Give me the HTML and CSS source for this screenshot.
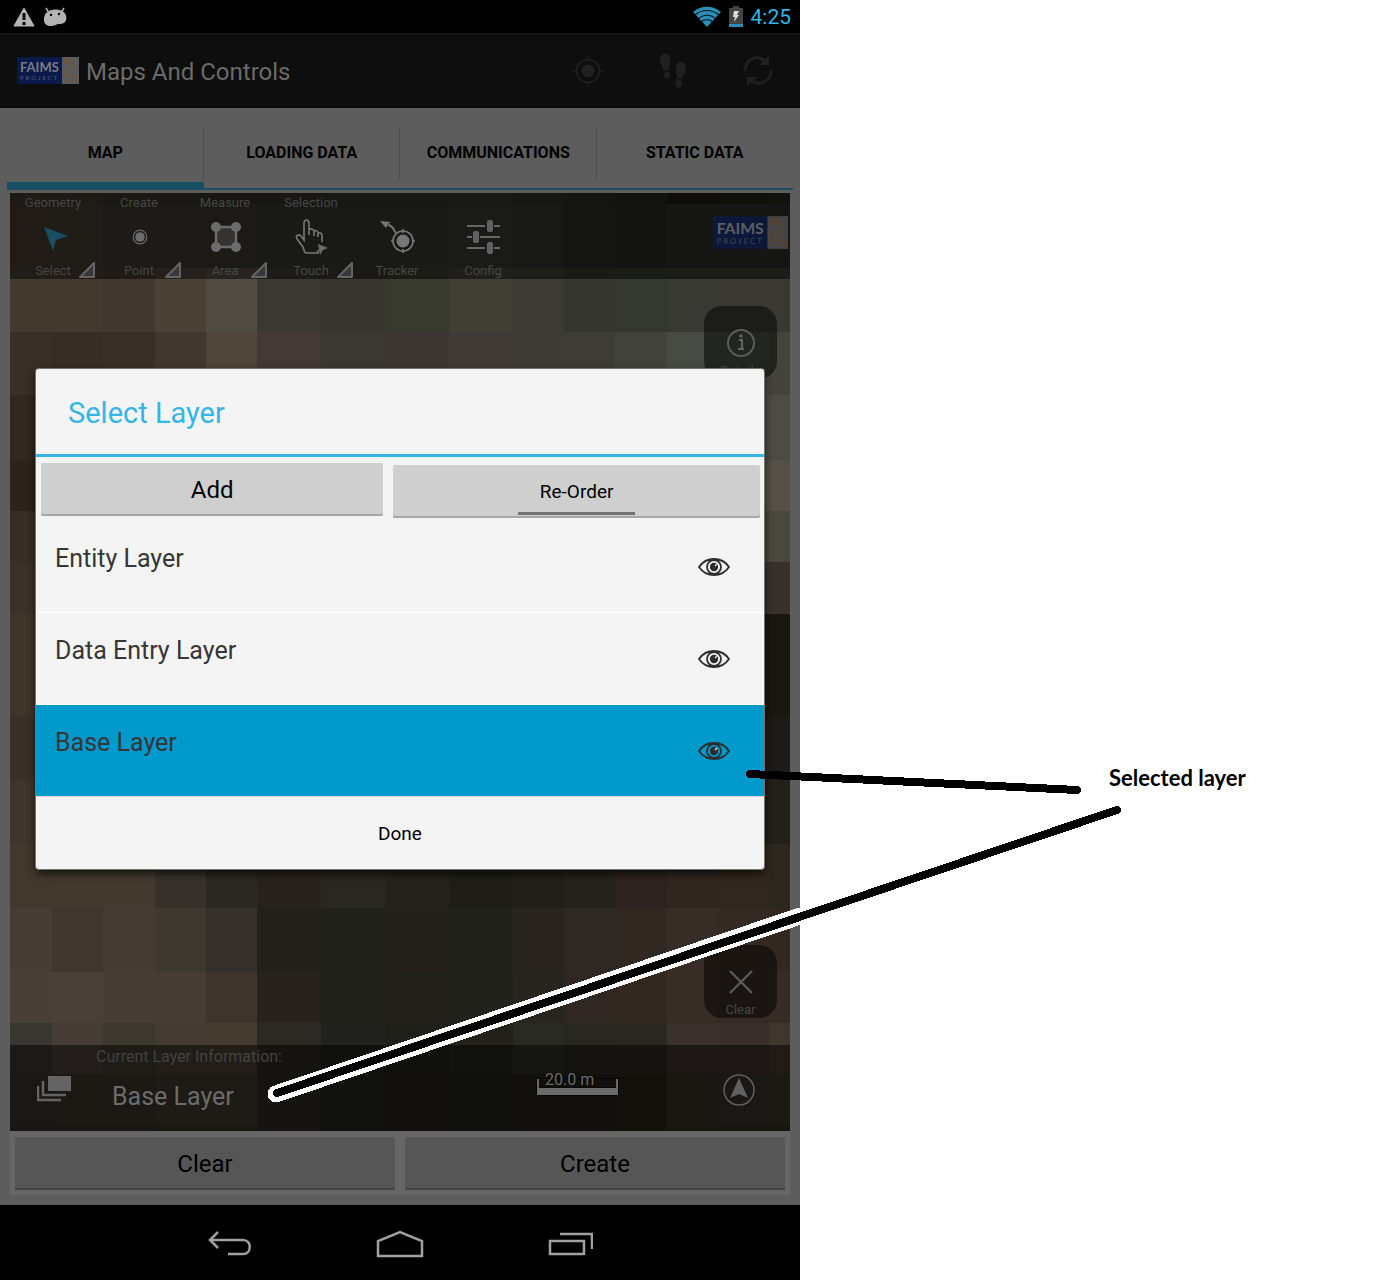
FILE: index.html
```html
<!DOCTYPE html>
<html lang="en">
<head>
<meta charset="utf-8">
<meta name="viewport" content="width=device-width, initial-scale=1">
<title>Maps And Controls</title>
<link rel="stylesheet" href="styles.css">
</head>
<body>
<svg class="defs" width="0" height="0" aria-hidden="true">
  <symbol id="eye" viewBox="0 0 32 18">
    <path d="M1 9C5 3 11 1 16 1s11 2 15 8c-4 6-10 8-15 8S5 15 1 9z" fill="none" stroke="#2d2d2d" stroke-width="1.800"/>
    <circle cx="16" cy="9" r="7" fill="none" stroke="#2d2d2d" stroke-width="1.800"/>
    <path d="M10 1h12v2H10zM10 15h12v2H10z" fill="#2d2d2d"/>
    <circle cx="16" cy="9" r="4.200" fill="#2d2d2d"/>
    <path d="M17 8l2-2" stroke="#ddd" stroke-width="1.500"/>
  </symbol>
  <symbol id="corner" viewBox="0 0 18 18">
    <path d="M16 2v14H2z" fill="#38383a" stroke="#646464" stroke-width="2" stroke-linejoin="round"/>
  </symbol>
</svg>

<div class="page">
  <main class="device">
    <header class="status">
      <svg width="22" height="20" viewBox="0 0 22 20"><path d="M11 1L21 19H1z" fill="#b4b4b4" stroke="#b4b4b4" stroke-linejoin="round"/><path d="M11 6v7M11 15v3" stroke="#000" stroke-width="3"/></svg>
      <svg width="24" height="20" viewBox="0 0 24 20"><path d="M3 1l3 5M21 1l-3 5" stroke="#b4b4b4" stroke-width="1.500"/><path d="M6 4c4-2 9-2 13 0 4 2 5 6 4 9-1 4-5 4-8 4-3 1-4 2-7 2-4 0-7-2-7-6 0-4 1-7 5-9z" fill="#b4b4b4"/><circle cx="8" cy="8" r="1.200"/><circle cx="16" cy="7" r="1.200"/></svg>
      <span class="status-gap"></span>
      <svg width="28" height="22" viewBox="0 0 28 22"><path d="M0 6C8-1 20-1 28 6L14 21z" fill="#2a8fb8"/><path d="M2 9c7-6 17-6 24 0M5 13c5-5 13-5 18 0M8 16c3-3 9-3 12 0" fill="none" stroke="#05141a" stroke-width="1.200"/></svg>
      <svg width="14" height="22" viewBox="0 0 14 22"><path d="M4 0h6v2h4v17H0V2h4z" fill="#444"/><path d="M0 18h14v3H0z" fill="#2a8fb8"/><path d="M5 5h5L8 9h2l-5 7 1-5H4z" fill="#ddd"/></svg>
      <time class="clock">4:25</time>
    </header>

    <div class="app">
      <header class="actionbar">
        <svg width="62" height="27" viewBox="0 0 62 27">
          <rect class="logo-blue" width="45" height="27"/>
          <rect class="logo-panel" x="45" width="17" height="27"/>
          <text class="logo-name" x="3" y="15">FAIMS</text>
          <text class="logo-sub" x="3" y="23">PROJECT</text>
          <path class="logo-art" d="M46 2h8v2h-7M47 6h8v3h3M55 2v7M58 13H47v10M48 17h6v3h-5M55 18h4M55 21h5v3H50"/>
        </svg>
        <h1>Maps And Controls</h1>
        <button type="button" aria-label="Locate"><svg width="32" height="32" viewBox="0 0 32 32" fill="none" stroke="#202020" stroke-width="1.600"><circle cx="16" cy="16" r="11.500"/><circle cx="16" cy="16" r="6.500" fill="#202020" stroke="none"/><path d="M16 0v5M16 27v5M0 16h5M27 16h5"/></svg></button>
        <button type="button" aria-label="Track"><svg width="26" height="36" viewBox="0 0 26 36" fill="#202020"><path d="M4 1c4-2 6 2 6 7 0 4-1 6-1 9l-5 1C3 14 0 11 0 7c0-3 1-5 4-6zM4 20l5-2c2 4 1 8-2 8s-3-3-3-6zM22 9c3 1 4 4 4 7 0 4-3 6-4 10l-5-1c0-3-1-5-1-8 0-5 2-9 6-8zM16 26l6 2c0 4-1 7-4 7-3-1-3-5-2-9z"/></svg></button>
        <button type="button" aria-label="Refresh"><svg width="30" height="32" viewBox="0 0 30 32"><g fill="none" stroke="#202020" stroke-width="3"><path d="M2 16C2 4 14-1 22 6M28 15c0 12-12 17-20 10"/></g><path d="M26 1v9H16zM4 31v-9h10z" fill="#202020"/></svg></button>
      </header>

      <nav class="tabs">
        <a class="tab active" href="#map">MAP</a>
        <a class="tab" href="#loading">LOADING DATA</a>
        <a class="tab" href="#communications">COMMUNICATIONS</a>
        <a class="tab" href="#static">STATIC DATA</a>
      </nav>

      <section class="map" id="map">
        <svg class="tiles" viewBox="10 193 780 938" preserveAspectRatio="none" shape-rendering="crispEdges" aria-hidden="true"></svg>
        <div class="toolbar">
          <button type="button" class="tool"><span>Geometry</span>
            <svg width="36" height="36" viewBox="0 0 36 36"><path d="M9 8l24 9-12 4-3 11z" fill="#194e61"/></svg>
            <span>Select</span><svg class="corner"><use href="#corner"/></svg></button>
          <button type="button" class="tool"><span>Create</span>
            <svg width="36" height="36" viewBox="0 0 36 36"><circle cx="19" cy="18" r="6.800" fill="none" stroke="#6c6c6c" stroke-width="1.200"/><circle cx="19" cy="18" r="4.800" fill="#6c6c6c"/></svg>
            <span>Point</span><svg class="corner"><use href="#corner"/></svg></button>
          <button type="button" class="tool"><span>Measure</span>
            <svg width="36" height="36" viewBox="0 0 36 36"><rect x="9" y="8" width="20" height="20" fill="#343331" stroke="#6c6c6c" stroke-width="2.500"/><g fill="#6c6c6c"><circle cx="9" cy="8" r="5"/><circle cx="29" cy="8" r="5"/><circle cx="9" cy="28" r="5"/><circle cx="29" cy="28" r="5"/></g></svg>
            <span>Area</span><svg class="corner"><use href="#corner"/></svg></button>
          <button type="button" class="tool"><span>Selection</span>
            <svg width="36" height="36" viewBox="0 0 36 36"><path d="M12 34l-2-6-6-8c-2-4 2-5 4-3l3 4V4c0-4 5-4 5 0v7c2-2 4-1 5 1 2-1 4 0 4 2 3-1 4 1 4 3v6M12 34h13v-3M16 11v5M21 12v5M25 14v4" fill="none" stroke="#777" stroke-width="1.600"/><path d="M25 25l10 4-5 2-3 5z" fill="#6c6c6c"/></svg>
            <span>Touch</span><svg class="corner"><use href="#corner"/></svg></button>
          <button type="button" class="tool"><span></span>
            <svg width="36" height="36" viewBox="0 0 36 36" fill="none" stroke="#777" stroke-width="1.600"><path d="M1 2l11 1-3 2-2 4z" fill="#777" stroke="none"/><path d="M9 6c6 1 5 5 8 8" stroke-width="2"/><circle cx="24" cy="22" r="10"/><circle cx="24" cy="22" r="6.500" fill="#777" stroke="none"/><path d="M24 10v4M24 30v4M12 22h3M33 22h3"/></svg>
            <span>Tracker</span></button>
          <button type="button" class="tool"><span></span>
            <svg width="36" height="36" viewBox="0 0 36 36"><path d="M2 7h18M29 7h6M2 18h5M15 18h20M2 29h18M29 29h6" stroke="#666" stroke-width="2"/><g fill="#606060"><rect x="22" y="1" width="6" height="12" rx="2"/><rect x="8" y="12" width="6" height="12" rx="2"/><rect x="22" y="23" width="6" height="12" rx="2"/></g></svg>
            <span>Config</span></button>
          <svg class="map-logo" width="75" height="33" viewBox="0 0 62 27">
            <rect class="logo-blue" width="45" height="27"/>
            <rect class="logo-panel" x="45" width="17" height="27"/>
            <text class="logo-name" x="3" y="15">FAIMS</text>
            <text class="logo-sub" x="3" y="23">PROJECT</text>
            <path class="logo-art" d="M46 2h8v2h-7M47 6h8v3h3M55 2v7M58 13H47v10M48 17h6v3h-5M55 18h4M55 21h5v3H50"/>
          </svg>
        </div>

        <div class="floaters">
          <button type="button" class="floater"><svg width="30" height="30" viewBox="0 0 30 30"><circle cx="15" cy="15" r="13" fill="none" stroke="#5c5c5c" stroke-width="2"/><path d="M13 12h3v9M12 21h6" fill="none" stroke="#646464" stroke-width="2.200"/><circle cx="15" cy="8" r="1.800" fill="#646464"/></svg><span>Details</span></button>
          <button type="button" class="floater"><svg width="30" height="30" viewBox="0 0 30 30"><path d="M4 4l22 22M26 4L4 26" stroke="#5c5c5c" stroke-width="2.200"/></svg><span>Clear</span></button>
        </div>

        <footer class="mapbar">
          <svg class="layers" width="34" height="28" viewBox="0 0 34 28"><path d="M11 1h23v15H11z" fill="#646464"/><path d="M6 6v14h23M1 11v14h23" fill="none" stroke="#646464" stroke-width="2.500"/></svg>
          <div class="layer-info">
            <p class="layer-caption">Current Layer Information:</p>
            <p class="layer-name">Base Layer</p>
          </div>
          <div class="scale"><span>20.0 m</span></div>
          <svg class="compass" width="32" height="32" viewBox="0 0 32 32"><circle cx="16" cy="16" r="15" fill="none" stroke="#606060" stroke-width="1.500"/><path d="M16 4l9 20-9-4-9 4z" fill="#606060"/></svg>
        </footer>
      </section>

      <div class="actions">
        <button type="button">Clear</button>
        <button type="button">Create</button>
      </div>

      <div class="overlay">
        <section class="dialog" role="dialog" aria-labelledby="dialog-title">
          <h2 id="dialog-title">Select Layer</h2>
          <div class="dialog-tools">
            <button type="button" class="add">Add</button>
            <button type="button" class="reorder"><span>Re-Order</span></button>
          </div>
          <ul class="layer-list">
            <li><span>Entity Layer</span><button type="button" aria-label="Show Entity Layer"><svg width="32" height="18"><use href="#eye"/></svg></button></li>
            <li><span>Data Entry Layer</span><button type="button" aria-label="Show Data Entry Layer"><svg width="32" height="18"><use href="#eye"/></svg></button></li>
            <li class="selected"><span>Base Layer</span><button type="button" aria-label="Show Base Layer"><svg width="32" height="18"><use href="#eye"/></svg></button></li>
          </ul>
          <button type="button" class="done">Done</button>
        </section>
      </div>
    </div>

    <nav class="navbar">
      <button type="button" aria-label="Back"><svg width="44" height="26" viewBox="0 0 44 26" fill="none" stroke="#a0a0a0" stroke-width="2.500"><path d="M2 9h33c9 0 9 14 0 14H20M10 1L2 9l8 8"/></svg></button>
      <button type="button" aria-label="Home"><svg width="48" height="28" viewBox="0 0 48 28" fill="none" stroke="#a0a0a0" stroke-width="2.500"><path d="M2 26V11l22-9 22 9v15z"/></svg></button>
      <button type="button" aria-label="Recent apps"><svg width="46" height="26" viewBox="0 0 46 26" fill="none" stroke="#a0a0a0" stroke-width="2.500"><path d="M3 10h34v13H3zM13 3h32v15"/></svg></button>
    </nav>
  </main>

  <aside class="notes"><p>Selected layer</p></aside>

  <svg class="pointers" width="1380" height="1280" viewBox="0 0 1380 1280" shape-rendering="crispEdges" stroke-linecap="round" aria-hidden="true">
    <path d="M276 1094L800 916" stroke="#fff" stroke-width="17"/>
    <path d="M277 1093L1117 810M750 774L1077 790" stroke="#000" stroke-width="8" fill="none"/>
  </svg>
</div>
<script src="script.js"></script>
</body>
</html>
```
FILE: styles.css
```css
* { box-sizing: border-box; }

body {
  margin: 0;
  background: #fff;
  color: #000;
  font-family: Roboto, "Liberation Sans", sans-serif;
}

h1, h2, p, ul { margin: 0; padding: 0; font-weight: 400; }
button { margin: 0; padding: 0; border: 0; background: none; color: inherit; font: inherit; }
svg { display: block; flex: none; }
.defs { position: absolute; }

.page { position: relative; display: flex; min-height: 100vh; overflow: hidden; }
.device { flex: 0 1 800px; display: flex; flex-direction: column; background: #000; }

/* Status bar */
.status { display: flex; align-items: center; gap: 8px; height: 33px; padding: 0 9px 0 13px; }
.status-gap { flex: 1; }
.clock { color: #33b5e5; font-size: 21px; line-height: 33px; padding-top: 2px; }

/* Logo */
.logo-blue { fill: #091a4a; }
.logo-panel { fill: #5c5c60; }
.logo-name { fill: #7c7c84; font-family: Lato, sans-serif; font-size: 13px; font-weight: 700; }
.logo-sub { fill: #565c74; font-family: Lato, sans-serif; font-size: 6px; letter-spacing: 2px; }
.logo-art { fill: none; stroke: #75512f; }

/* Application frame */
.app { position: relative; flex: 1; display: flex; flex-direction: column; background: #5d5d5d; }
.actionbar { display: flex; align-items: center; height: 75px; padding-left: 17px; background: #0e0e0e; box-shadow: inset 0 1px #1a1a1a, inset 0 -2px #090909; }
.actionbar h1 { flex: 1; margin-left: 7px; padding-top: 2px; color: #6b6b6b; font-size: 24px; line-height: 32px; }
.actionbar button { display: grid; place-items: center; width: 85px; height: 75px; }

.tabs { display: flex; height: 82px; margin: 0 7px 3px; padding-top: 8px; }
.tab {
  position: relative;
  flex: 1;
  border-bottom: 2px solid #1b4f61;
  color: #000;
  font-size: 16px;
  font-weight: 700;
  line-height: 73px;
  text-align: center;
  text-decoration: none;
}
.tab.active { border-bottom: 8px solid #184e61; }
.tab + .tab::before { content: ""; position: absolute; top: 10px; left: -1px; width: 1px; height: 53px; background: #4f4f4f; }

/* Map */
.map { position: relative; flex: 1; display: flex; flex-direction: column; margin: 0 10px; overflow: hidden; }
.tiles { position: absolute; inset: 0; width: 100%; height: 100%; }
.toolbar { position: relative; display: flex; height: 86px; background: rgba(0, 0, 0, .5); }
.tool { position: relative; display: grid; grid-template-rows: 20px 48px 20px; place-items: center; align-content: start; width: 86px; color: #464644; font-size: 13px; line-height: 20px; }
.tool .corner { position: absolute; right: 0; bottom: 0; width: 18px; height: 18px; }
.map-logo { margin: 23px 2px 0 auto; opacity: .7; }

.floaters { position: relative; flex: 1; display: flex; flex-direction: column; align-items: flex-end; justify-content: space-between; padding: 27px 13px; }
.floater { display: flex; flex-direction: column; align-items: center; gap: 3px; width: 73px; height: 73px; padding-top: 22px; border-radius: 18px; background: rgba(0, 0, 0, .5); color: #464644; font-size: 13px; line-height: 20px; }

.mapbar { position: relative; display: flex; height: 86px; padding: 0 35px 0 27px; background: rgba(0, 0, 0, .5); }
.layers { margin-top: 30px; }
.layer-info { flex: 1; margin-left: 25px; }
.layer-caption { color: #424240; font-size: 16px; line-height: 24px; }
.layer-name { padding-left: 16px; color: #6c6c6c; font-size: 25px; line-height: 56px; }
.scale {
  width: 81px;
  height: 16px;
  margin: 34px 105px 0 0;
  padding-left: 6px;
  border: solid #6a6a6a;
  border-width: 0 2px 7px;
  box-shadow: 0 0 0 1px #060606, inset 0 -1px #060606;
  color: #6c6c6c;
  font-size: 16px;
  line-height: 2px;
}
.scale span { white-space: nowrap; text-shadow: 0 0 2px #000; }
.compass { margin-top: 29px; }

/* Buttons */
.actions { display: flex; gap: 10px; margin: 0 10px 10px; padding: 6px 5px 5px; background: #666; }
.actions button { flex: 1; height: 53px; border-radius: 2px; background: #565656; box-shadow: inset 0 -2px 0 #444; font-size: 24px; line-height: 54px; }

/* Layer dialog */
.overlay { position: absolute; inset: 0; display: flex; align-items: center; padding: 0 36px; }
.dialog { flex: 1; overflow: hidden; border-radius: 3px; background: #f4f4f4; box-shadow: 0 0 0 1px #77736e, 0 4px 10px rgba(0, 0, 0, .8); }
.dialog h2 { height: 88px; padding-left: 32px; border-bottom: 3px solid #33b5e5; color: #33b5e5; font-size: 29px; line-height: 88px; }
.dialog-tools { display: flex; align-items: flex-start; gap: 10px; padding: 6px 4px 3px 5px; }
.dialog-tools button { height: 53px; border-radius: 2px; background: #cfcfcf; box-shadow: inset 0 -2px 0 #a6a6a6; line-height: 54px; }
.add { flex: 14; font-size: 24px; }
.reorder { flex: 15; display: flex; justify-content: center; margin-top: 2px; font-size: 19px; }
.reorder span { width: 117px; height: 50px; border-bottom: 3px solid #737373; }
.layer-list { list-style: none; }
.layer-list li { display: flex; align-items: center; justify-content: space-between; height: 92px; padding: 0 34px 0 19px; border-bottom: 1px solid #fff; color: #363636; font-size: 25px; }
.layer-list span { align-self: flex-start; line-height: 76px; }
.layer-list .selected { background: #0099cc; border-bottom-color: #d4d4d4; }
.done { display: block; width: 100%; height: 72px; font-size: 19px; line-height: 74px; }

/* System navigation */
.navbar { display: flex; justify-content: center; height: 75px; padding-top: 3px; }
.navbar button { display: grid; place-items: center; width: 170px; }

/* Annotation */
.notes { flex: 1; padding: 763px 0 0 309px; }
.notes p { font-family: Lato, "Open Sans", sans-serif; font-size: 22px; font-weight: 700; line-height: 30px; white-space: nowrap; }
.pointers { position: absolute; top: 0; left: 0; pointer-events: none; }
```
FILE: script.js
```js
// Pixelated raster layer: column and row edges, then one colour per cell.
const cols = [10, 52, 103, 155, 206, 257, 321, 385, 449, 513, 564, 615, 667, 718, 769, 790];
const rows = [193, 204, 268, 332, 395, 460, 511, 562, 614, 716, 780, 844, 908, 972, 1023, 1074, 1126, 1131];
const cells = [
  "3c352d 3c352d 363029 302e28 2e2c25 2e2c25 2f2e27 2f3028 30312a 2b2b28 282825 252522 1c1b18 1f1e19 25241e",
  "40362e 40382f 3a362f 3a362f 37342d 33332c 32342c 32342b 34342f 31312f 2a2a27 292926 2c2c2b 2c2c2a 2b2b27",
  "423a2f 43392f 41372f 4a4137 504a43 3b3831 38352e 38392f 403f36 3b3b34 34362f 343830 383932 393832 393832",
  "3a2f26 382d24 3a2f27 40372e 4e453b 443a35 3b3731 3b3630 3f3a33 3d3c34 3e3c37 42433c 474b43 474b43 44443a",
  "31281f 31281f 31281f 31281f 31281f 31281f 31281f 31281f 4c4b45 4c4b45 4c4b45 4c4b45 4c4b45 4c4b45 4c4b45",
  "2c241b 2c241b 2c241b 2c241b 2c241b 2c241b 2c241b 2c241b 555148 555148 555148 555148 555148 555148 555148",
  "372e25 372e25 372e25 372e25 372e25 372e25 372e25 372e25 4a483e 4a483e 4a483e 4a483e 4a483e 4a483e 4a483e",
  "3c3129 3c3129 3c3129 3c3129 3c3129 3c3129 3c3129 3c3129 38312b 38312b 38312b 38312b 38312b 38312b 38312b",
  "40352b 40352b 40352b 40352b 40352b 40352b 40352b 40352b 1a1711 1a1711 1a1711 1a1711 1a1711 1a1711 1a1711",
  "3b3028 3b3028 3b3028 3b3028 3b3028 3b3028 3b3028 3b3028 1c1b17 1c1b17 1c1b17 1c1b17 1c1b17 1c1b17 1c1b17",
  "40352c 40352c 40352c 40352c 40352c 40352c 40352c 40352c 231f19 231f19 231f19 231f19 231f19 231f19 231f19",
  "43382e 43392f 43392f 37312b 2b2822 28221c 2a2620 25211b 1e1e16 221f18 25211b 2d231f 31261e 32271e 2c271c",
  "463d34 40362d 453b33 3d392e 35302b 231f19 22221c 24201a 21221b 28241d 2e2823 302821 382d26 342a23 32281f",
  "483f36 4a4037 473d34 463c33 3e342b 27231c 20211b 22201a 21221b 28241e 302622 32281f 372d25 352b24 362c25",
  "393530 463d37 3c382d 443b32 463b31 2c2822 21211d 1e1f18 22221b 2a2a24 292721 2b2821 3a302c 3a302b 40362c",
  "35302a 39332b 39332a 3d342b 3d342c 2c2822 22231c 201f18 1f2018 222119 24211a 282319 342e26 34312a 38322b",
  "302c26 302c26 302c26 352c24 352c24 2c2822 22231c 201f18 1f2018 222119 24211a 282319 302a22 302a22 302a22"
];
const svg = document.querySelector(".tiles");
cells.forEach((line, r) => line.split(" ").forEach((color, c) => {
  const rect = document.createElementNS("http://www.w3.org/2000/svg", "rect");
  rect.setAttribute("x", cols[c]);
  rect.setAttribute("y", rows[r]);
  rect.setAttribute("width", cols[c + 1] - cols[c]);
  rect.setAttribute("height", rows[r + 1] - rows[r]);
  rect.setAttribute("fill", "#" + color);
  svg.append(rect);
}));
```
